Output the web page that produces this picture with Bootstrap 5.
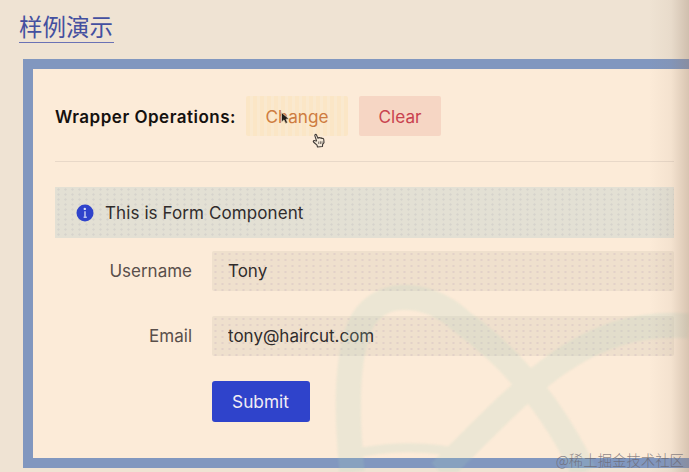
<!DOCTYPE html>
<html lang="zh-CN">
<head>
    <meta charset="UTF-8">
    <meta name="viewport" content="width=device-width, initial-scale=1.0">
    <title>样例演示</title>
    <link href="https://cdn.jsdelivr.net/npm/bootstrap@5.3.2/dist/css/bootstrap.min.css" rel="stylesheet">
    <style>
        body {
            height: 472px;
            background: #efe3d3;
            color: #302c2c;
            font-family: Inter, "Noto Sans CJK SC", sans-serif;
            font-size: 17px;
            line-height: 24px;
        }
        .demo-title {
            margin: 11px 0 0 19px;
            width: 95px;
            height: 32px;
            border-bottom: 1.5px solid #6a72b5;
            color: #4450a0;
            font: 400 23.5px/31px "Noto Sans CJK SC", sans-serif;
        }
        .wrapper-box {
            margin: 16px 0 0 23px;
            height: 409px;
            border: 10px solid #8197bf;
            border-right: 0;
            padding: 27px 15px 0 22px;
            background: #fcebd8;
        }
        .op-title {
            width: 191px;
            padding-top: 1px;
            color: #15110f;
            font-size: 17px;
            font-weight: 600;
            letter-spacing: .5px;
        }
        .op-btn {
            height: 40px;
            padding: 1px 0 0;
            border: 0;
            border-radius: 2px;
            font-size: 17.2px;
        }
        .op-change {
            width: 102px;
            color: #ce7c40;
            background: repeating-linear-gradient(90deg, #fbe6c6 0 4px, #fae9cf 4px 7px);
        }
        .op-clear {
            width: 82px;
            margin-left: 11px;
            color: #c9424f;
            background: #f6d6c4;
        }
        .op-btn:hover {
            opacity: .9;
        }
        .split-line {
            height: 1px;
            margin: 25px 0;
            background: #e8d8c8;
        }
        .info-alert {
            height: 51px;
            padding-left: 21px;
            gap: 11px;
            background: radial-gradient(circle, #d6d3cc 0 .8px, transparent 1.5px) 0 0 / 7px 5px, #e3e0d4;
        }
        .info-alert span {
            padding-top: 1px;
            letter-spacing: .1px;
        }
        .form-line {
            height: 40px;
        }
        .first-line {
            margin-top: 13px;
        }
        .second-line {
            margin-top: 25px;
        }
        .field-label {
            width: 137px;
            margin-right: 20px;
            color: #594f4b;
        }
        .field-input {
            height: 40px;
            padding: 0 16px;
            border: 0;
            border-radius: 2px;
            color: #302c2c;
            font-size: 17px;
            background: radial-gradient(circle, #e2d1c8 0 .8px, transparent 1.5px) 0 0 / 7px 6px, #efe0cd;
        }
        .submit-btn {
            width: 98px;
            height: 41px;
            margin: 25px 0 0 156.5px;
            padding: 0;
            border: 0;
            border-radius: 3px;
            background: #2f43cb;
            color: #f3edf4;
            font-size: 17.3px;
        }
        .backdrop-art {
            filter: blur(1px);
            pointer-events: none;
        }
        .edge-shade {
            width: 40px;
            background: linear-gradient(90deg, rgba(150, 125, 105, 0), rgba(150, 125, 105, .08) 55%, rgba(150, 125, 105, .35));
            pointer-events: none;
        }
        .site-mark {
            right: 5px;
            bottom: 1px;
            color: rgba(105, 100, 108, .75);
            font: 300 14.4px/22px "Noto Sans CJK SC", sans-serif;
        }
        .cursor-arrow {
            left: 280px;
            top: 111px;
        }
        .cursor-hand {
            left: 312px;
            top: 133px;
        }
    </style>
</head>
<body class="position-relative overflow-hidden d-flex flex-column">
    <h1 class="demo-title flex-shrink-0 text-nowrap">样例演示</h1>

    <main class="wrapper-box flex-shrink-0">
        <!-- Operations -->
        <div class="d-flex align-items-center">
            <span class="op-title text-nowrap">Wrapper Operations:</span>
            <button type="button" class="btn op-btn op-change">Change</button>
            <button type="button" class="btn op-btn op-clear">Clear</button>
        </div>
        <div class="split-line"></div>

        <!-- Form component -->
        <div class="info-alert d-flex align-items-center">
            <svg width="18" height="18" viewBox="0 0 18 18">
                <circle cx="9" cy="9" r="8.5" fill="#2f43cb"/>
                <path d="M9 7.2V13.2M7.6 13.2H10.8" fill="none" stroke="#b9c3ee" stroke-width="1.6"/>
                <circle cx="8.8" cy="4.9" r="1.2" fill="#dce2f6"/>
            </svg>
            <span>This is Form Component</span>
        </div>
        <form onsubmit="return false">
            <div class="form-line first-line d-flex align-items-center">
                <label for="username" class="field-label text-end">Username</label>
                <input type="text" id="username" class="field-input flex-grow-1" value="Tony">
            </div>
            <div class="form-line second-line d-flex align-items-center">
                <label for="email" class="field-label text-end">Email</label>
                <input type="text" id="email" class="field-input flex-grow-1" value="tony@haircut.com">
            </div>
            <button type="submit" class="btn submit-btn d-block">Submit</button>
        </form>
    </main>

    <!-- Ribbon over the panel -->
    <svg class="backdrop-art position-absolute top-0 start-0" width="689" height="472" viewBox="0 0 689 472">
        <g opacity=".18" fill="none" stroke="#a5d2c0" stroke-width="25">
            <path d="M352 472C347 420 345 365 359 328C374 289 425 288 461 321C506 354 550 400 584 472M440 472C486 427 512 399 545 373C594 335 640 322 689 326"/>
            <path d="M362 452Q420 442 470 456" stroke-width="9"/>
        </g>
    </svg>
    <div class="edge-shade position-absolute top-0 end-0 h-100"></div>

    <!-- Pointers -->
    <svg class="cursor-arrow position-absolute" width="10" height="14" viewBox="0 0 10 14">
        <path d="M1.5 1.5V11L4 8.9L5.7 12.5L7.5 11.6L6 8.2L9 7.9Z" fill="#211c18" stroke="#e8d8bd" stroke-width=".7"/>
    </svg>
    <svg class="cursor-hand position-absolute" width="14" height="15" viewBox="0 0 14 15">
        <path d="M4.6 8L2.8 2.6C2.5 1.4 4 .9 4.5 2L6 5.4L6.4 4.7C7 4.2 7.8 4.6 8 5.2C8.6 4.6 9.4 4.8 9.8 5.5C10.8 5 11.7 5.7 11.8 6.8L12 9.6L10.6 11.3L10.5 13.5L5.5 14L5 12.2L1.5 9C.7 7.9 2 7.1 3 7.7Z" fill="#f4e9d9" stroke="#403a36" stroke-width="1.1" stroke-linejoin="round"/>
        <path d="M6.7 8.5V11M8.4 8.3V11M10 8.3V10.7" stroke="#403a36" stroke-width=".7"/>
    </svg>

    <div class="site-mark position-absolute text-nowrap">@稀土掘金技术社区</div>

    <script src="https://cdn.jsdelivr.net/npm/bootstrap@5.3.2/dist/js/bootstrap.bundle.min.js"></script>
</body>
</html>
